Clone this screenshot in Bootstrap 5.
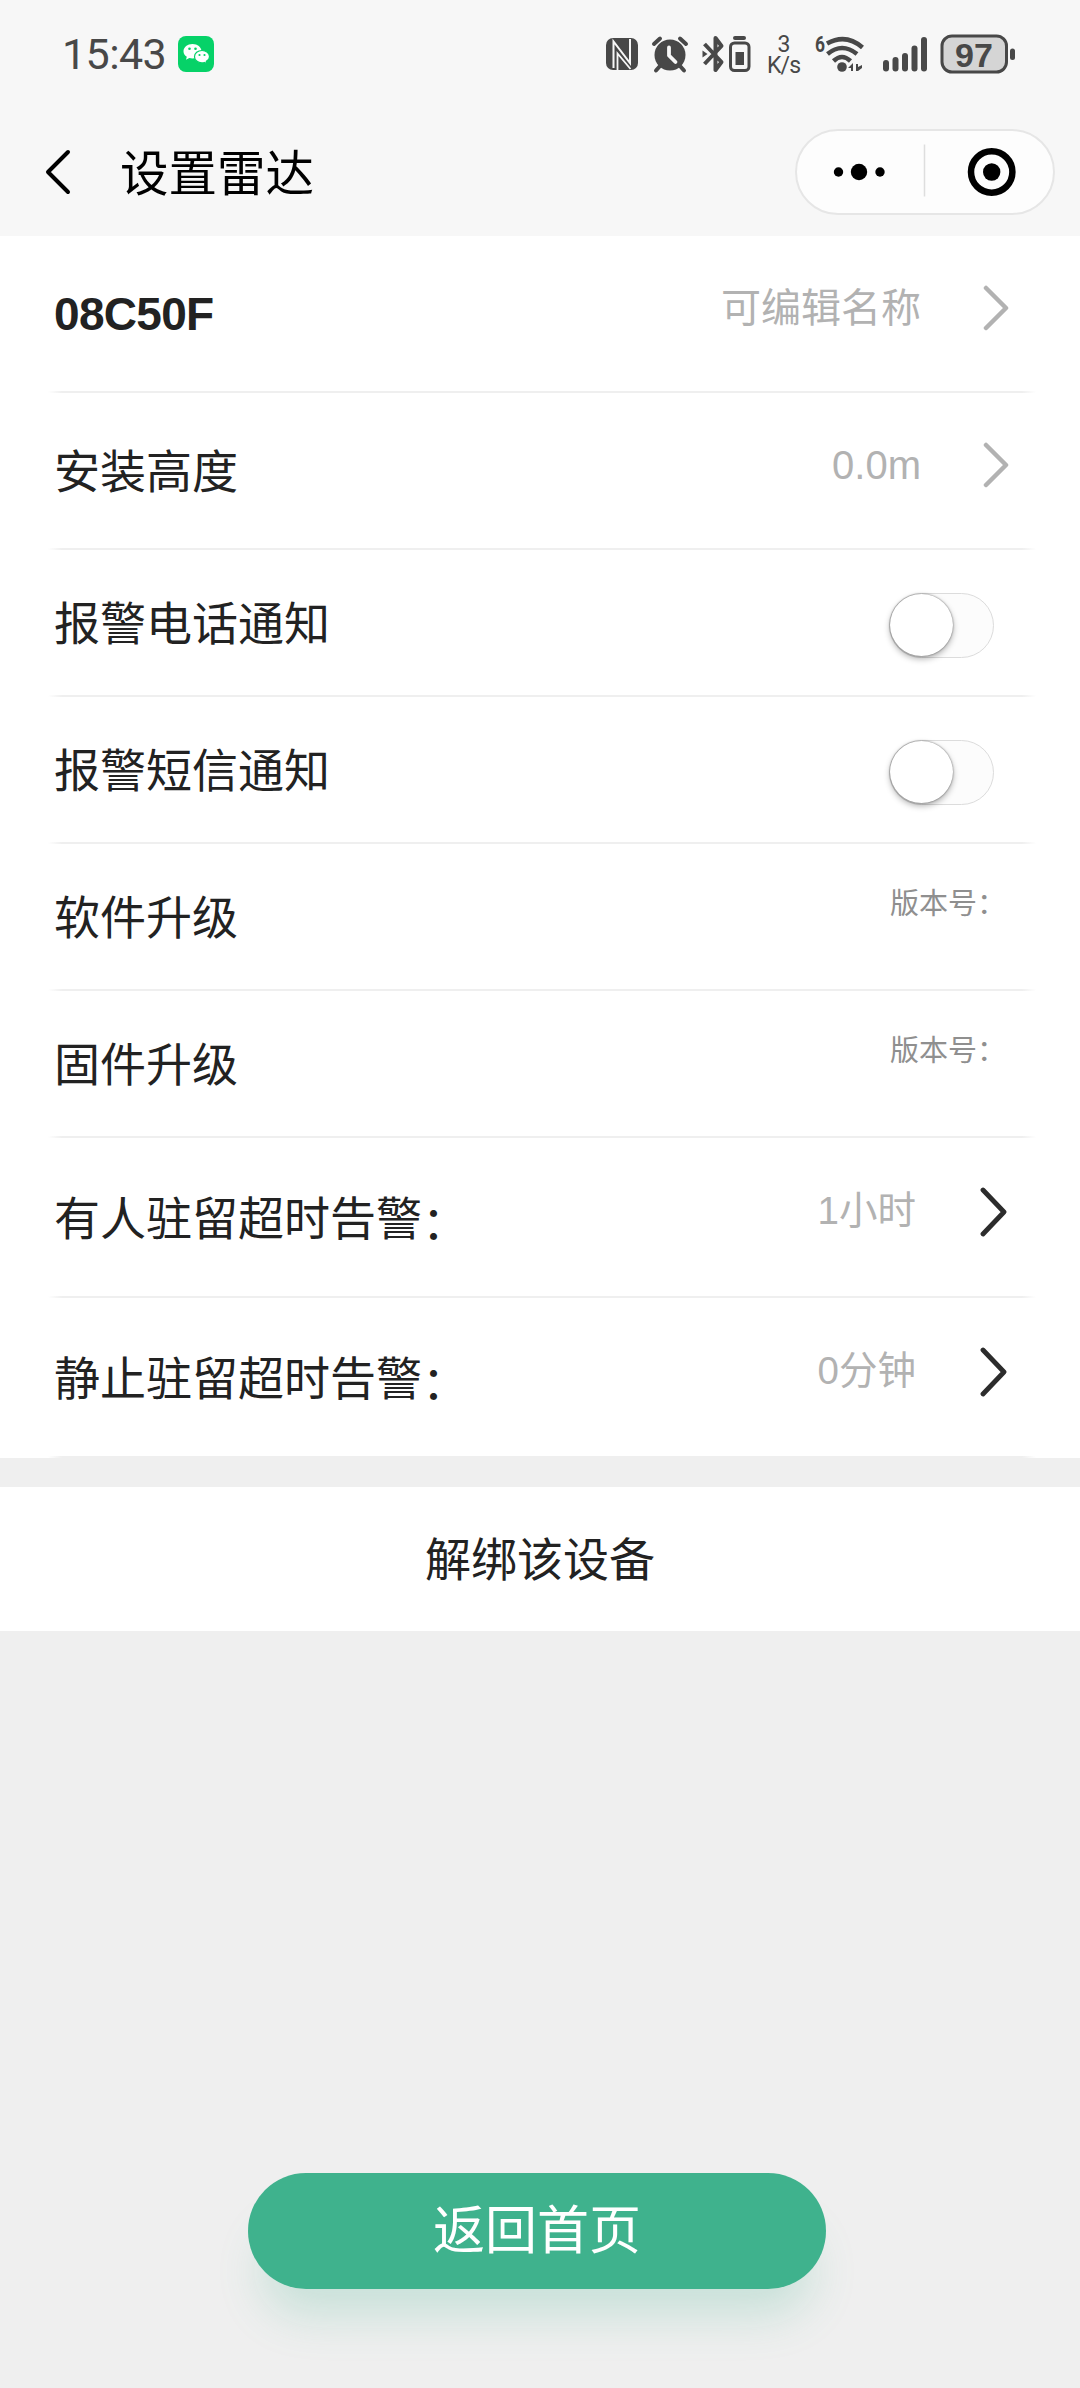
<!DOCTYPE html>
<html lang="zh-CN">
<head>
<meta charset="utf-8">
<meta name="viewport" content="width=device-width, initial-scale=1">
<title>设置雷达</title>
<link href="https://cdn.jsdelivr.net/npm/bootstrap@5.3.0/dist/css/bootstrap.min.css" rel="stylesheet">
<style>
  body { background: #efefef; color: #222; font-family: "Liberation Sans", "Noto Sans CJK SC", sans-serif; min-height: 2388px; }
  svg { display: block; flex: none; }
  .top-area { background: #f7f7f7; height: 236px; }
  .status-bar { height: 108px; padding-left: 62px; padding-right: 65px; color: #484848; }
  .clock { font: 400 43px/1 Roboto, sans-serif; letter-spacing: -.6px; width: 116px; }
  .title-bar { height: 128px; padding: 0 25px 0 44px; }
  .page-title { font-size: 48.5px; line-height: 60px; color: #000; margin-left: 49px; padding-top: 4px; }
  .capsule { width: 260px; height: 86px; border: 2px solid #e6e6e6; border-radius: 43px; background: #fdfdfd; }
  .setting-row { padding: 3px 71px 0 54px; line-height: 1.2; font-size: 46px;
    background: linear-gradient(to right, transparent 48px, #efefef 62px, #efefef 1022px, transparent 1036px) bottom / 100% 2px no-repeat #fff; }
  .row-tall { height: 157px; }
  .row-mid { height: 147px; }
  .row-stay { height: 160px; }
  .device-id { font: 700 46px/1.2 "Liberation Sans", sans-serif; letter-spacing: -.7px; padding-bottom: 3px; }
  .low-colon { position: relative; top: 4px; }
  .hint { font-size: 40px; color: #b2b2b2; gap: 62px; }
  .row-stay .hint { font-size: 38.5px; gap: 64px; padding-right: 2px; }
  .version { font-size: 29px; color: #8f8f8f; padding-bottom: 30px; width: 119px; }
  .switch-track { width: 105px; height: 65px; border: 1.5px solid #dcdcdc; border-radius: 33px; background: #fcfcfc; margin-right: 15px; }
  .switch-knob { width: 63px; height: 62px; border-radius: 50%; background: #fff; box-shadow: 0 3px 6px rgba(0,0,0,.3), 0 0 2px rgba(0,0,0,.55); }
  .unbind { margin-top: 29px; height: 144px; font-size: 46px; color: #222; border: 0; padding-top: 4px; }
  .home-btn { width: 578px; height: 116px; margin: 542px 0 0 248px; font-size: 52px; color: #fff; background: #3fb28d;
    box-shadow: 0 40px 46px -14px rgba(63,178,141,.22); border: 0; padding: 0; }
</style>
<script src="https://cdn.jsdelivr.net/npm/bootstrap@5.3.0/dist/js/bootstrap.bundle.min.js"></script>
</head>
<body>
<header class="top-area">
  <div class="status-bar d-flex align-items-center">
    <span class="clock">15:43</span>
    <svg width="36" height="36" viewBox="0 0 36 36">
      <rect width="36" height="36" rx="8" fill="#06d268"/>
      <path d="M14.500 8C9.500 8 5.500 11.200 5.500 15.200c0 2.300 1.300 4.200 3.300 5.500l-.8 3 3.300-1.700q1.500.4 3.200.4c5 0 9-3.200 9-7.200S19.500 8 14.500 8" fill="#fff"/>
      <path d="M24 14.500c-4.200 0-7.500 2.800-7.500 6.200s3.300 6.200 7.500 6.200q1.300 0 2.500-.4l2.400 1.300-.6-2.400c2-1.100 3.200-2.800 3.200-4.700 0-3.400-3.300-6.200-7.500-6.200" fill="#fff" stroke="#06d268" stroke-width="1.200"/>
      <g fill="#06d268"><circle cx="11.500" cy="12.800" r="1.300"/><circle cx="17.500" cy="12.800" r="1.300"/><circle cx="21.500" cy="19" r="1.100"/><circle cx="26.500" cy="19" r="1.100"/></g>
    </svg>
    <svg class="ms-auto" width="413" height="60" viewBox="602 24 413 60" fill="#484848">
      <!-- NFC -->
      <rect x="606" y="38" width="32" height="32" rx="7"/>
      <path d="M613.500 68V41.500L630 63V39" fill="none" stroke="#f7f7f7" stroke-width="2"/>
      <path d="M617.500 70V53.500L630.500 69" fill="none" stroke="#f7f7f7" stroke-width="1.800"/>
      <!-- alarm -->
      <circle cx="670" cy="55" r="15.500"/>
      <path d="M654 44l6-5.500M686 44l-6-5.500M660 66l-4 4.500M680 66l4 4.500" stroke="#484848" stroke-width="4" stroke-linecap="round"/>
      <path d="M669 47.500v8l6.500 6.500" fill="none" stroke="#f7f7f7" stroke-width="3.800" stroke-linecap="round" stroke-linejoin="round"/>
      <!-- bluetooth with accessory battery -->
      <path d="M704.500 44L721.500 62l-6 8V38l6 8L704.500 64" fill="none" stroke="#484848" stroke-width="4" stroke-linejoin="round"/>
      <path d="M702.500 50.500l5 3.500-5 3.500z"/>
      <rect x="733" y="36" width="13" height="4" rx="2"/>
      <rect x="730.500" y="43" width="18.500" height="27.500" rx="4" fill="none" stroke="#484848" stroke-width="3"/>
      <rect x="735.500" y="52" width="8.500" height="13"/>
      <!-- network speed -->
      <g font-family="Roboto, sans-serif">
        <text x="784" y="52" font-size="23" text-anchor="middle">3</text>
        <text x="784" y="73" font-size="23" text-anchor="middle" textLength="34">K/s</text>
        <text x="820" y="52" font-size="22" font-weight="700" text-anchor="middle" textLength="10" lengthAdjust="spacingAndGlyphs">6</text>
      </g>
      <!-- wifi -->
      <g fill="none" stroke="#484848" stroke-width="4.500">
        <path d="M827 43.500Q846 33 862.500 47.500"/>
        <path d="M827.500 54Q842 42 857 54"/>
        <path d="M833.500 61Q842 53 850.500 61"/>
      </g>
      <circle cx="842" cy="67" r="4.800"/>
      <path d="M848 68l5-5v8h-2v-3zM856 64h2v3l4-2v3l-4 3h-2z"/>
      <!-- signal -->
      <rect x="883" y="60" width="6" height="11.500" rx="3"/><rect x="892.500" y="57" width="6" height="14.500" rx="3"/><rect x="902" y="53" width="6" height="18.500" rx="3"/><rect x="911.500" y="45.500" width="6" height="26" rx="3"/><rect x="921" y="37" width="6" height="34.500" rx="3"/>
      <!-- battery -->
      <rect x="942" y="36" width="64.500" height="36" rx="10" fill="#d5d5d5" stroke="#484848" stroke-width="3"/>
      <rect x="1010" y="48.500" width="5" height="11.500" rx="2.500"/>
      <text x="974" y="66.500" font-family="Liberation Sans, sans-serif" font-size="34" font-weight="700" text-anchor="middle">97</text>
    </svg>
  </div>
  <div class="title-bar d-flex align-items-center">
    <svg width="27" height="48" viewBox="0 0 27 48" fill="none" stroke="#000" stroke-width="4" stroke-linecap="round" stroke-linejoin="round"><path d="M24 4L4 24l20 20"/></svg>
    <div class="page-title">设置雷达</div>
    <div class="capsule ms-auto">
      <svg width="256" height="82" viewBox="798 130.500 256 82"><g><circle cx="839.500" cy="171.500" r="4.700"/><circle cx="860" cy="171.500" r="8.200"/><circle cx="881" cy="171.500" r="4.700"/><path d="M925.500 144v52" stroke="#dedede" stroke-width="1.500"/><circle cx="992.700" cy="171.500" r="20.700" fill="none" stroke="#000" stroke-width="6.500"/><circle cx="992.700" cy="171.500" r="8.700"/></g></svg>
    </div>
  </div>
</header>

<main>
  <section class="bg-white">
    <div class="setting-row row-tall d-flex align-items-center justify-content-between">
      <span class="device-id">08C50F</span>
      <span class="hint d-flex align-items-center pb-3">可编辑名称<svg width="26" height="46" viewBox="0 0 26 46" fill="none" stroke="#b2b2b2" stroke-width="4.500" stroke-linecap="round" stroke-linejoin="round"><path d="M3 3l20 20L3 43"/></svg></span>
    </div>
    <div class="setting-row row-tall d-flex align-items-center justify-content-between">
      <span>安装高度</span>
      <span class="hint d-flex align-items-center pb-3">0.0m<svg width="26" height="46" viewBox="0 0 26 46" fill="none" stroke="#b2b2b2" stroke-width="4.500" stroke-linecap="round" stroke-linejoin="round"><path d="M3 3l20 20L3 43"/></svg></span>
    </div>
    <div class="setting-row row-mid d-flex align-items-center justify-content-between">
      <span>报警电话通知</span>
      <div class="switch-track" role="switch" aria-checked="false"><div class="switch-knob"></div></div>
    </div>
    <div class="setting-row row-mid d-flex align-items-center justify-content-between">
      <span>报警短信通知</span>
      <div class="switch-track" role="switch" aria-checked="false"><div class="switch-knob"></div></div>
    </div>
    <div class="setting-row row-mid d-flex align-items-center justify-content-between">
      <span>软件升级</span>
      <span class="version text-nowrap">版本号：</span>
    </div>
    <div class="setting-row row-mid d-flex align-items-center justify-content-between">
      <span>固件升级</span>
      <span class="version text-nowrap">版本号：</span>
    </div>
    <div class="setting-row row-stay d-flex align-items-center justify-content-between">
      <span>有人驻留超时告警<span class="low-colon">：</span></span>
      <span class="hint d-flex align-items-center pb-3">1小时<svg width="27" height="50" viewBox="0 0 27 50" fill="none" stroke="#2c2c2c" stroke-width="4.800" stroke-linecap="round" stroke-linejoin="round"><path d="M3 3l21 22L3 47"/></svg></span>
    </div>
    <div class="setting-row row-stay d-flex align-items-center justify-content-between">
      <span>静止驻留超时告警<span class="low-colon">：</span></span>
      <span class="hint d-flex align-items-center pb-3">0分钟<svg width="27" height="50" viewBox="0 0 27 50" fill="none" stroke="#2c2c2c" stroke-width="4.800" stroke-linecap="round" stroke-linejoin="round"><path d="M3 3l21 22L3 47"/></svg></span>
    </div>
  </section>
  <button class="unbind bg-white w-100 d-flex align-items-center justify-content-center">解绑该设备</button>
  <button class="home-btn btn rounded-pill d-flex align-items-center justify-content-center">返回首页</button>
</main>
</body>
</html>
